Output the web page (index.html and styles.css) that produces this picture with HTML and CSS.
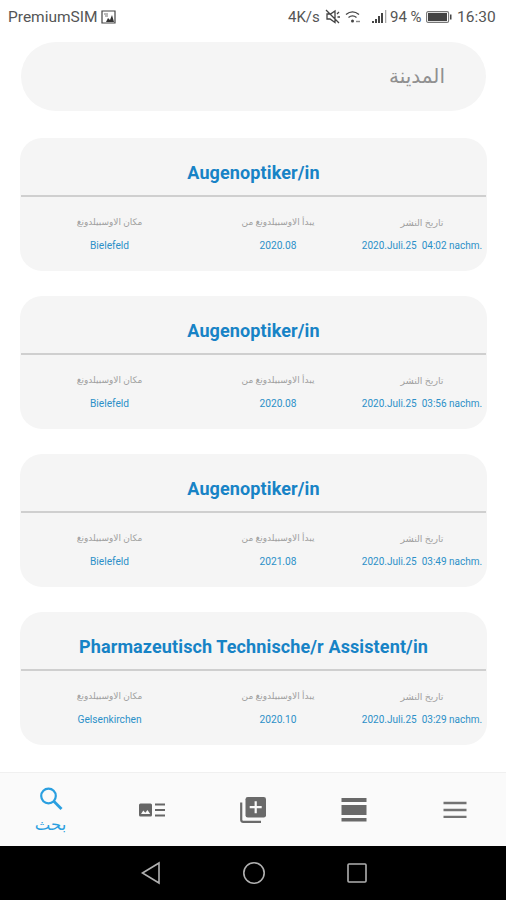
FILE: index.html
```html
<!DOCTYPE html>
<html lang="ar">
<head>
  <meta charset="UTF-8">
  <meta name="viewport" content="width=device-width, initial-scale=1.0">
  <title>Ausbildung</title>
  <link rel="stylesheet" href="styles.css">
</head>
<body>
  <!-- Status bar -->
  <header class="status-bar">
    <span class="carrier">PremiumSIM</span>
    <svg class="icon-shot" width="15" height="14" viewBox="0 0 15 14">
      <path d="M1 1h13v12H1z" fill="none" stroke="#444" stroke-width="1.2"/>
      <path d="M3 4h4M4 6h3" stroke="#777" fill="none"/>
      <path d="M5 12l2-4 2 2 2-5 2 7z" fill="#333"/>
    </svg>
    <span class="speed">4K/s</span>
    <svg class="icon-mute" width="15" height="15" viewBox="0 0 15 15" fill="none" stroke="#444" stroke-width="1.3">
      <path d="M2 5v5h3l5 3.500V2L5.500 5zM1 1l13 13M12 5l2-2M12.500 8H15"/>
    </svg>
    <svg class="icon-wifi" width="16" height="14" viewBox="0 0 16 14" fill="none" stroke="#444" stroke-width="1.400">
      <path d="M1 4.500Q7.500-.8 14 4.500M3.500 7.500q4-3.200 8 0"/>
      <circle cx="7.500" cy="11" r="1.500" fill="#444" stroke="none"/>
      <path d="M11 11.500h4" stroke="#888"/>
    </svg>
    <svg class="icon-signal" width="15" height="13" viewBox="0 0 15 13">
      <path d="M0 11h2v2H0zM3 9h2v4H3zM6 6h2v7H6zM9 3h2v10H9z" fill="#444"/>
      <path d="M13 0h1.300v13H13z" fill="#aaa"/>
    </svg>
    <span class="percent">94 %</span>
    <svg class="icon-battery" width="26" height="12" viewBox="0 0 26 12">
      <rect x=".6" y=".6" width="22" height="10.800" rx="1.500" fill="none" stroke="#777" stroke-width="1.100"/>
      <path d="M2 2h19v8H2z" fill="#444"/>
      <path d="M24 3.500h1.500v5H24z" fill="#444"/>
    </svg>
    <span class="clock">16:30</span>
  </header>

  <main class="content">
    <div class="search" dir="rtl">المدينة</div>

    <section class="card">
      <h2>Augenoptiker/in</h2>
      <div class="details">
        <div><p class="label" dir="rtl">مكان الاوسبيلدونغ</p><p class="value">Bielefeld</p></div>
        <div><p class="label" dir="rtl">يبدأ الاوسبيلدونغ من</p><p class="value">2020.08</p></div>
        <div><p class="label label-date" dir="rtl">تاريخ النشر</p><p class="value value-date">2020.Juli.25&nbsp; 04:02 nachm.</p></div>
      </div>
    </section>

    <section class="card">
      <h2>Augenoptiker/in</h2>
      <div class="details">
        <div><p class="label" dir="rtl">مكان الاوسبيلدونغ</p><p class="value">Bielefeld</p></div>
        <div><p class="label" dir="rtl">يبدأ الاوسبيلدونغ من</p><p class="value">2020.08</p></div>
        <div><p class="label label-date" dir="rtl">تاريخ النشر</p><p class="value value-date">2020.Juli.25&nbsp; 03:56 nachm.</p></div>
      </div>
    </section>

    <section class="card">
      <h2>Augenoptiker/in</h2>
      <div class="details">
        <div><p class="label" dir="rtl">مكان الاوسبيلدونغ</p><p class="value">Bielefeld</p></div>
        <div><p class="label" dir="rtl">يبدأ الاوسبيلدونغ من</p><p class="value">2021.08</p></div>
        <div><p class="label label-date" dir="rtl">تاريخ النشر</p><p class="value value-date">2020.Juli.25&nbsp; 03:49 nachm.</p></div>
      </div>
    </section>

    <section class="card">
      <h2>Pharmazeutisch Technische/r Assistent/in</h2>
      <div class="details">
        <div><p class="label" dir="rtl">مكان الاوسبيلدونغ</p><p class="value">Gelsenkirchen</p></div>
        <div><p class="label" dir="rtl">يبدأ الاوسبيلدونغ من</p><p class="value">2020.10</p></div>
        <div><p class="label label-date" dir="rtl">تاريخ النشر</p><p class="value value-date">2020.Juli.25&nbsp; 03:29 nachm.</p></div>
      </div>
    </section>
  </main>

  <!-- App tabs -->
  <nav class="tabs">
    <a class="tab active">
      <svg width="24" height="24" viewBox="0 0 24 24" fill="none" stroke="#2a9fe0" stroke-width="2.200">
        <circle cx="9.500" cy="9" r="7.300"/>
        <path d="M14.800 14.300l7.700 7.700" stroke-width="2.800"/>
      </svg>
      <span dir="rtl">بحث</span>
    </a>
    <a class="tab">
      <svg width="28" height="14" viewBox="0 0 28 14">
        <rect x="1" y="0.500" width="13" height="13" rx="1.500" fill="#666"/>
        <path d="M3 11l2.300-3.500 2 2.200L9.500 7l2.700 4z" fill="#fafafa"/>
        <path d="M17 1.500h10M17 7h10M17 12.500h10" stroke="#666" stroke-width="2"/>
      </svg>
    </a>
    <a class="tab">
      <svg width="26" height="26" viewBox="0 0 26 26">
        <path d="M1.200 5.500v17.300q0 2 2 2H21" fill="none" stroke="#6a6a6a" stroke-width="2.200"/>
        <rect x="5.500" y="0" width="20.500" height="20.500" rx="2.300" fill="#6a6a6a"/>
        <path d="M15.700 4.200v12M9.700 10.200h12" stroke="#fafafa" stroke-width="2.200"/>
      </svg>
    </a>
    <a class="tab">
      <svg width="26" height="24" viewBox="0 0 26 24" fill="#696969">
        <path d="M.5 0h25v4H.5zM.5 7h25v10H.5zM.5 20h25v3.500H.5z"/>
      </svg>
    </a>
    <a class="tab">
      <svg width="24" height="18" viewBox="0 0 24 18" stroke="#737373" stroke-width="2.300">
        <path d="M.5 2h23M.5 9h23M.5 15.800h23"/>
      </svg>
    </a>
  </nav>

  <!-- System buttons -->
  <footer class="system-bar">
    <svg width="22" height="24" viewBox="0 0 22 24"><path d="M2.500 12L19 2v20z"/></svg>
    <svg width="24" height="24" viewBox="0 0 24 24"><circle cx="12" cy="12" r="10.200"/></svg>
    <svg width="22" height="22" viewBox="0 0 22 22"><rect x="2" y="2" width="18" height="18" rx="1"/></svg>
  </footer>
</body>
</html>
```
FILE: styles.css
```css
* {
  box-sizing: border-box;
}

body {
  margin: 0;
  height: 900px;
  display: flex;
  flex-direction: column;
  overflow: hidden;
  background-color: #fff;
  font-family: Roboto, "DejaVu Sans", sans-serif;
}

.status-bar {
  height: 33px;
  padding: 0 10px 0 8px;
  display: flex;
  align-items: center;
  font-size: 15px;
  color: #555;
  white-space: nowrap;
}

.carrier {
  width: 90px;
  margin-right: 3px;
  font-size: 15.5px;
}

.speed {
  margin-left: auto;
  width: 34px;
}

.icon-mute {
  margin-left: 3px;
}

.icon-wifi {
  margin-left: 5px;
}

.icon-signal {
  margin-left: 11px;
}

.percent {
  width: 33px;
  margin-left: 3px;
}

.icon-battery {
  margin-left: 3px;
}

.clock {
  width: 39px;
  margin-left: 5px;
  font-size: 15.5px;
}

.content {
  flex: 1;
  padding: 9px 19px 0 20px;
}

.search {
  height: 69px;
  margin: 0 1px 27px;
  padding-right: 41px;
  border-radius: 35px;
  background-color: #f5f5f5;
  color: #909090;
  font-size: 20px;
  line-height: 68px;
}

.card {
  height: 133px;
  margin-bottom: 25px;
  border-radius: 22px;
  background-color: #f5f5f5;
  text-align: center;
}

.card h2 {
  height: 59px;
  margin: 0 1px;
  padding-top: 11px;
  border-bottom: 2px solid #cfcfcf;
  color: #1783c6;
  font-size: 18px;
  font-weight: 700;
  letter-spacing: 0.12px;
  line-height: 48px;
}

.details {
  display: grid;
  grid-template-columns: 179px 158px 130px;
  padding-top: 14px;
  white-space: nowrap;
}

.details p {
  margin: 0;
}

.label {
  height: 22px;
  color: #a0a0a0;
  font-size: 9px;
  line-height: 23px;
}

.label-date {
  font-size: 9.4px;
}

.value {
  color: #2c90c8;
  font-size: 10.2px;
  line-height: 26px;
}

.value-date {
  font-size: 10px;
}

.tabs {
  height: 74px;
  display: grid;
  grid-template-columns: repeat(5, 1fr);
  background-color: #fafafa;
  border-top: 1px solid #f0f0f0;
}

.tab {
  display: flex;
  flex-direction: column;
  align-items: center;
  justify-content: center;
}

.active {
  padding-top: 7px;
  color: #2a9fe0;
  font-size: 16.5px;
  line-height: 28px;
}

.system-bar {
  height: 54px;
  padding-left: 1px;
  display: flex;
  align-items: center;
  justify-content: center;
  gap: 80px;
  background-color: #000;
}

.system-bar svg {
  fill: none;
  stroke: #b0b0b0;
  stroke-width: 1.6;
}
```
